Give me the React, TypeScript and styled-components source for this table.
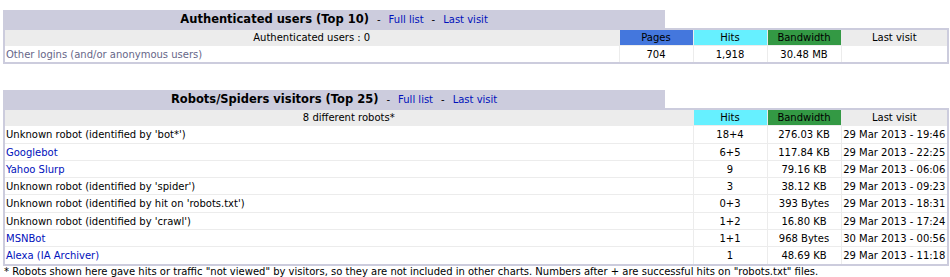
import styled, { createGlobalStyle } from 'styled-components';

const GlobalStyle = createGlobalStyle`
  body {
    margin: 0;
    background: #ffffff;
    font-family: Verdana, "DejaVu Sans", sans-serif;
    font-size: 10px;
    color: #000000;
  }
`;

type Robot = {
  name: string;
  link?: boolean;
  hits: string;
  bandwidth: string;
  lastVisit: string;
};

const robots: Robot[] = [
  { name: "Unknown robot (identified by 'bot*')", hits: '18+4', bandwidth: '276.03 KB', lastVisit: '29 Mar 2013 - 19:46' },
  { name: 'Googlebot', link: true, hits: '6+5', bandwidth: '117.84 KB', lastVisit: '29 Mar 2013 - 22:25' },
  { name: 'Yahoo Slurp', link: true, hits: '9', bandwidth: '79.16 KB', lastVisit: '29 Mar 2013 - 06:06' },
  { name: "Unknown robot (identified by 'spider')", hits: '3', bandwidth: '38.12 KB', lastVisit: '29 Mar 2013 - 09:23' },
  { name: "Unknown robot (identified by hit on 'robots.txt')", hits: '0+3', bandwidth: '393 Bytes', lastVisit: '29 Mar 2013 - 18:31' },
  { name: "Unknown robot (identified by 'crawl')", hits: '1+2', bandwidth: '16.80 KB', lastVisit: '29 Mar 2013 - 17:24' },
  { name: 'MSNBot', link: true, hits: '1+1', bandwidth: '968 Bytes', lastVisit: '30 Mar 2013 - 00:56' },
  { name: 'Alexa (IA Archiver)', link: true, hits: '1', bandwidth: '48.69 KB', lastVisit: '29 Mar 2013 - 11:18' },
];

const COLORS = {
  pages: '#4477DD',
  hits: '#66F0FF',
  bandwidth: '#339944',
};

const SectionTitle = ({ title }: { title: string }) => (
  <StyledTitleRow>
    <StyledTitle>
      {title}
      <StyledSep>-</StyledSep>
      <StyledTitleLink href="/not/navigate">Full list</StyledTitleLink>
      <StyledSep>-</StyledSep>
      <StyledTitleLink href="/not/navigate">Last visit</StyledTitleLink>
    </StyledTitle>
  </StyledTitleRow>
);

const App = () => (
  <>
    <GlobalStyle />
    <StyledPage>
      <StyledSection $gap={26}>
        <SectionTitle title="Authenticated users (Top 10)" />
        <StyledBox>
          <StyledTable>
            <colgroup>
              <col />
              <col width={74} />
              <col width={74} />
              <col width={74} />
              <col width={106} />
            </colgroup>
            <thead>
              <StyledHeadRow>
                <StyledTh>Authenticated users : 0</StyledTh>
                <StyledTh $bg={COLORS.pages}>Pages</StyledTh>
                <StyledTh $bg={COLORS.hits}>Hits</StyledTh>
                <StyledTh $bg={COLORS.bandwidth}>Bandwidth</StyledTh>
                <StyledTh>Last visit</StyledTh>
              </StyledHeadRow>
            </thead>
            <tbody>
              <tr>
                <StyledTd $left>
                  <StyledOther>Other logins (and/or anonymous users)</StyledOther>
                </StyledTd>
                <StyledTd>704</StyledTd>
                <StyledTd>1,918</StyledTd>
                <StyledTd>30.48 MB</StyledTd>
                <StyledTd />
              </tr>
            </tbody>
          </StyledTable>
        </StyledBox>
      </StyledSection>

      <StyledSection $gap={0}>
        <SectionTitle title="Robots/Spiders visitors (Top 25)" />
        <StyledBox>
          <StyledTable>
            <colgroup>
              <col />
              <col width={74} />
              <col width={74} />
              <col width={106} />
            </colgroup>
            <thead>
              <StyledHeadRow>
                <StyledTh>8 different robots*</StyledTh>
                <StyledTh $bg={COLORS.hits}>Hits</StyledTh>
                <StyledTh $bg={COLORS.bandwidth}>Bandwidth</StyledTh>
                <StyledTh>Last visit</StyledTh>
              </StyledHeadRow>
            </thead>
            <tbody>
              {robots.map((robot) => (
                <tr key={robot.name}>
                  <StyledTd $left>
                    {robot.link ? <StyledLink href="/not/navigate">{robot.name}</StyledLink> : robot.name}
                  </StyledTd>
                  <StyledTd>{robot.hits}</StyledTd>
                  <StyledTd>{robot.bandwidth}</StyledTd>
                  <StyledTd>{robot.lastVisit}</StyledTd>
                </tr>
              ))}
            </tbody>
          </StyledTable>
        </StyledBox>
        <StyledNote>
          * Robots shown here gave hits or traffic "not viewed" by visitors, so they are not included in other charts. Numbers after + are successful hits on "robots.txt" files.
        </StyledNote>
      </StyledSection>
    </StyledPage>
  </>
);

const StyledPage = styled.div`
  padding: 10px 1px 0 3px;
`;

const StyledSection = styled.section<{ $gap: number }>`
  margin-bottom: ${({ $gap }) => $gap}px;
`;

const StyledTitleRow = styled.div`
  display: flex;
`;

const StyledTitle = styled.div`
  width: 70%;
  height: 18px;
  background-color: #ccccdd;
  display: flex;
  align-items: center;
  justify-content: center;
  font-size: 11.5px;
  font-weight: bold;
  white-space: nowrap;
`;

const StyledSep = styled.span`
  margin: 0 8px;
  font-size: 10px;
  font-weight: normal;
`;

const StyledTitleLink = styled.a`
  color: #0011bb;
  font-size: 10px;
  font-weight: normal;
  text-decoration: none;
`;

const StyledBox = styled.div`
  border: 2px solid #ccccdd;
  background: #ffffff;
`;

const StyledTable = styled.table`
  width: 100%;
  border-collapse: collapse;
  table-layout: fixed;
`;

const StyledHeadRow = styled.tr`
  background-color: #ececec;
`;

const StyledTh = styled.th<{ $bg?: string }>`
  height: 15px;
  padding: 0 1px;
  font-weight: normal;
  font-size: 10px;
  line-height: 15px;
  text-align: center;
  white-space: nowrap;
  background-color: ${({ $bg }) => $bg ?? 'transparent'};
  border-right: 1px solid #ececec;
  border-bottom: 1px solid #ececec;

  &:last-child {
    border-right: none;
  }
`;

const StyledTd = styled.td<{ $left?: boolean }>`
  height: 15.3px;
  padding: 1px 1px 0;
  font-size: 10px;
  line-height: 15.3px;
  text-align: ${({ $left }) => ($left ? 'left' : 'center')};
  white-space: nowrap;
  overflow: hidden;
  border-right: 1px solid #ececec;
  border-bottom: 1px solid #ececec;

  &:last-child {
    border-right: none;
  }

  tr:last-child > & {
    border-bottom: none;
  }
`;

const StyledOther = styled.span`
  color: #666688;
`;

const StyledLink = styled.a`
  color: #0011bb;
  text-decoration: none;
`;

const StyledNote = styled.div`
  padding-left: 1px;
  font-size: 10px;
  line-height: 12px;
  white-space: nowrap;
`;

export default App;
